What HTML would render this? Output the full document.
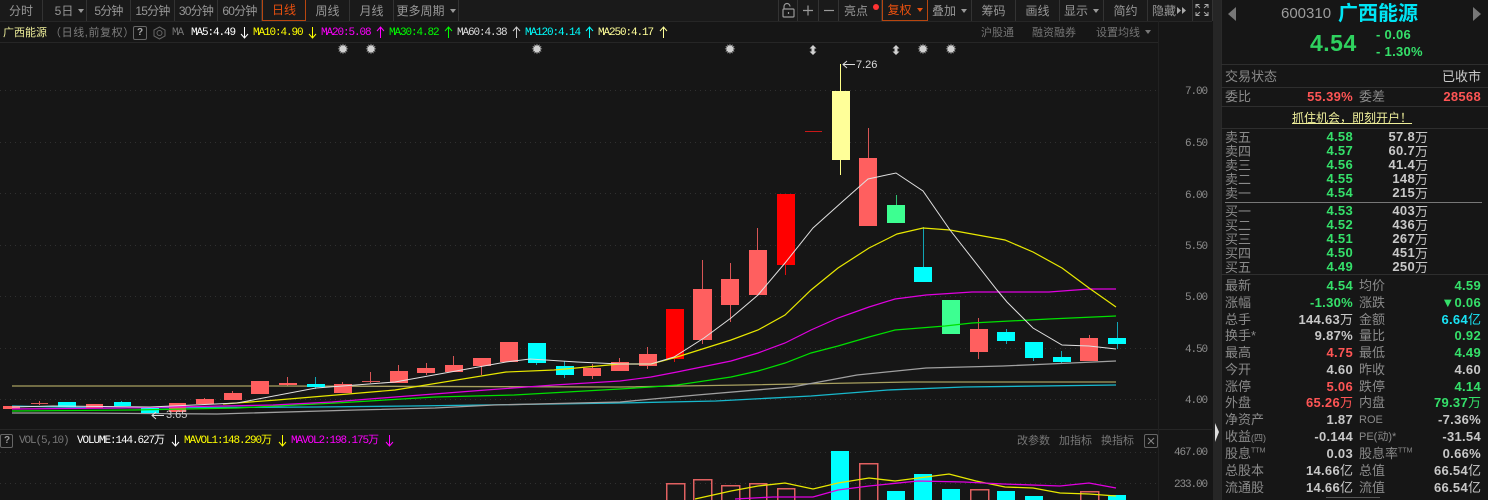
<!DOCTYPE html>
<html lang="zh">
<head>
<meta charset="utf-8">
<title>广西能源 600310</title>
<style>
html,body{margin:0;padding:0;background:#161616}
#p{position:relative;width:1488px;height:500px;overflow:hidden;background:#161616;font-family:"Liberation Sans","Noto Sans CJK SC",sans-serif;color:#999}
.t{position:absolute;white-space:nowrap;line-height:14px;height:14px}
.b{position:absolute;top:0;height:21px;line-height:22px;text-align:center;font-size:12px;color:#979797;border-right:1px solid #333;box-sizing:border-box;white-space:nowrap}
.n{letter-spacing:-.8px}
.on{border:1px solid #b8460f;border-top:0;color:#e8500f;line-height:21px}
.caret{display:inline-block;border:3px solid transparent;border-top:4px solid #999;border-bottom:0;margin-left:5px;vertical-align:2px}
.m{font-family:"Liberation Mono","Noto Sans CJK SC",monospace;font-size:11px;letter-spacing:-1.1px;top:26px}
.g{color:#8a8a8a;font-size:13px}
.v{font-size:13px;font-weight:bold;letter-spacing:.3px}
.gr{color:#35e06a}.rd{color:#ff5555}.wh{color:#c8c8c8}.cy{color:#19e3f5}
.ax{font-family:"Liberation Mono",monospace;font-size:11px;letter-spacing:-1.1px;color:#8c8c8c}
.l{position:absolute;background:#2e2e2e;height:1px;left:1221px;width:267px}
.s{position:absolute;top:43px;font-family:"DejaVu Sans",sans-serif;font-size:14px;line-height:14px;color:#d0d0d0;width:16px;text-align:center}
svg{position:absolute;left:0;top:0}
</style>
</head>
<body>
<div id="p">
<svg width="1488" height="500" viewBox="0 0 1488 500">
<rect x="0" y="0" width="1212" height="21" fill="#1a1a1a"/>
<g stroke="#262626" shape-rendering="crispEdges">
<path d="M0 21.500H1212M0 42.500H1158M0 429.500H1212M1213.500 0V500"/>
<path d="M1158.500 21V500" stroke="#212121"/>
</g>
<rect x="1214" y="0" width="7" height="500" fill="#262626"/>
<g stroke="#303030" stroke-dasharray="1 4" shape-rendering="crispEdges">
<path d="M0 90.500H1160M0 142.500H1160M0 193.500H1160M0 245.500H1160M0 296.500H1160M0 348.500H1160M0 399.500H1160M0 452.500H1160M0 483.500H1160"/>
</g>
<path d="M1215 423L1219 432L1215 442Z" fill="#ddd"/>

<!-- wicks -->
<g stroke-width="1" shape-rendering="crispEdges" fill="none">
<g stroke="#d85555">
<path d="M39.500 401V405M232.500 391V400M204.500 398V404M287.500 377V386M342.500 382V393M370.500 372V383M398.500 365V383M426.500 363V375M453.500 356V372M481.500 358V375M592.500 364V379M619.500 358V371M647.500 347V369M702.500 260V344M730.500 263V322M757.500 228V295M868.500 128V158M978.500 318V359M1089.500 335V361"/>
<path d="M31 403.500H48M362 381.500H380M279 384.500H297" />
</g>
<path d="M805 131.500H822" stroke="#c81818"/>
<path d="M674.500 309V362M785.500 194V275" stroke="#e01010"/>
<path d="M840.500 64V175" stroke="#ffff88"/>
<path d="M896.500 195V205" stroke="#2fbf70"/>
<g stroke="#11a5b5">
<path d="M121.500 401V406M315.500 377V389M536.500 343V365M564.500 361V378M923.500 227V267M1006.500 329V344M1033.500 342V361M1061.500 351V364M1117.500 322V349"/>
</g>
</g>

<!-- MA lines under flat region -->
<g fill="none" stroke-width="1.300">
<polyline stroke="#a8a060" points="12,386 273,386 620,387 742,385 911,382 1116,382"/>
<polyline stroke="#18b8cc" points="12,406 103,408 316,407 411,406 554,404 620,403 716,401 811,396 888,390 964,387 1116,385"/>
<polyline stroke="#a0a0a0" points="12,413 79,413 217,414 356,410 435,408 494,405 620,402 697,395 792,387 857,375 926,368 1003,366 1049,364 1116,361"/>
</g>

<!-- bodies -->
<g shape-rendering="crispEdges">
<g fill="#ff5f5f">
<rect x="3" y="406" width="17" height="3"/>
<rect x="86" y="404" width="17" height="4"/>
<rect x="169" y="403" width="17" height="9"/>
<rect x="196" y="399" width="18" height="5"/>
<rect x="224" y="393" width="18" height="7"/>
<rect x="251" y="381" width="18" height="13"/>
<rect x="279" y="383" width="18" height="2"/>
<rect x="334" y="384" width="18" height="9"/>
<rect x="390" y="371" width="18" height="12"/>
<rect x="417" y="368" width="18" height="5"/>
<rect x="445" y="365" width="18" height="7"/>
<rect x="473" y="358" width="18" height="8"/>
<rect x="500" y="342" width="18" height="20"/>
<rect x="583" y="368" width="18" height="8"/>
<rect x="611" y="362" width="18" height="9"/>
<rect x="639" y="354" width="18" height="12"/>
<rect x="693" y="289" width="19" height="51"/>
<rect x="721" y="279" width="18" height="26"/>
<rect x="749" y="250" width="18" height="45"/>
<rect x="859" y="158" width="18" height="68"/>
<rect x="970" y="329" width="18" height="23"/>
<rect x="1080" y="338" width="18" height="23"/>
</g>
<g fill="#00ffff">
<rect x="58" y="402" width="18" height="5"/>
<rect x="114" y="402" width="17" height="4"/>
<rect x="141" y="408" width="18" height="5"/>
<rect x="307" y="384" width="18" height="3"/>
<rect x="528" y="343" width="18" height="20"/>
<rect x="556" y="366" width="18" height="9"/>
<rect x="914" y="267" width="18" height="15"/>
<rect x="997" y="332" width="18" height="9"/>
<rect x="1025" y="342" width="18" height="16"/>
<rect x="1053" y="357" width="18" height="5"/>
<rect x="1108" y="338" width="18" height="6"/>
</g>
<rect x="666" y="309" width="18" height="50" fill="#ff0000"/>
<rect x="777" y="194" width="18" height="71" fill="#ff0000"/>
<rect x="832" y="91" width="18" height="69" fill="#ffff99"/>
<rect x="887" y="205" width="18" height="18" fill="#3dff91"/>
<rect x="942" y="300" width="18" height="34" fill="#3dff91"/>
</g>

<!-- MA lines -->
<g fill="none" stroke-width="1">
<polyline stroke="#00e000" stroke-width="1.200" points="12,411 134,410 237,408 336,403 435,397 514,395 620,389 651,387 677,385 731,377 758,371 785,363 811,353 838,346 869,337 895,330 945,326 972,323 1049,319 1116,316"/>
<polyline stroke="#e000e0" stroke-width="1.200" points="12,409 120,408 273,405 332,402 395,397 486,390 554,385 620,381 651,377 677,372 731,361 758,353 785,343 811,330 838,318 869,307 895,299 926,295 972,292 1049,292 1089,289 1116,289"/>
<polyline stroke="#e8e800" stroke-width="1.200" points="223,404 277,400 395,390 506,372 554,370 620,364 651,364 677,357 731,340 758,330 785,315 811,290 838,268 869,248 897,234 923,228 950,230 1005,240 1033,252 1062,268 1089,288 1116,307"/>
<polyline stroke="#e0e0e0" points="12,407 53,406 150,407 237,403 316,388 395,382 506,362 530,359 577,362 620,364 651,364 674,357 704,338 731,318 758,295 785,263 813,228 842,202 868,179 896,173 923,191 950,230 997,290 1007,302 1033,328 1062,345 1089,346 1116,349"/>
</g>

<!-- max/min arrows -->
<g fill="none" stroke="#ddd" stroke-width="1">
<path d="M855 64.500H843M847 61L843 64.500L847 68"/>
<path d="M164 415.500H152M156 412L152 415.500L156 419"/>
</g>

<!-- volume -->
<g shape-rendering="crispEdges">
<g fill="none" stroke="#e06060" stroke-width="1.500">
<path d="M666.500 500V483.500H684.500V500M693.500 500V479.500H711.500V500M721.500 500V485.500H739.500V500M749.500 500V483.500H766.500V500M777.500 500V488.500H794.500V500M859.500 500V463.500H877.500V500M970.500 500V489.500H988.500V500M1080.500 500V491.500H1098.500V500"/>
</g>
<g fill="#00ffff">
<rect x="831" y="451" width="18" height="49"/>
<rect x="887" y="491" width="18" height="9"/>
<rect x="914" y="474" width="18" height="26"/>
<rect x="942" y="489" width="18" height="11"/>
<rect x="997" y="491" width="18" height="9"/>
<rect x="1025" y="496" width="18" height="4"/>
<rect x="1108" y="495" width="18" height="5"/>
</g>
</g>
<g fill="none" stroke-width="1.300">
<polyline stroke="#e8e800" points="695,499 731,491 758,486 785,483 813,489 838,483 869,478 895,481 949,474 976,481 1005,487 1033,488 1060,493 1089,494 1116,496"/>
<polyline stroke="#e000e0" points="735,499 773,497 813,497 838,490 869,486 918,481 964,482 1003,484 1060,486 1089,483 1116,488"/>
</g>

<!-- header arrows -->
<g fill="none" stroke-width="1">
<path d="M244.500 27V38M241 34L244.500 38L248 34" stroke="#fff"/>
<path d="M312.500 27V38M309 34L312.500 38L316 34" stroke="#ff0"/>
<path d="M380.500 27V38M377 31L380.500 27L384 31" stroke="#f0f"/>
<path d="M448.500 27V38M445 31L448.500 27L452 31" stroke="#0f0"/>
<path d="M516.500 27V38M513 31L516.500 27L520 31" stroke="#ccc"/>
<path d="M589.500 27V38M586 31L589.500 27L593 31" stroke="#0ff"/>
<path d="M663.500 27V38M660 31L663.500 27L667 31" stroke="#ffff99"/>
<path d="M175.500 435V446M172 442L175.500 446L179 442" stroke="#fff"/>
<path d="M282.500 435V446M279 442L282.500 446L286 442" stroke="#ff0"/>
<path d="M389.500 435V446M386 442L389.500 446L393 442" stroke="#f0f"/>
</g>

<!-- small boxes/icons -->
<g fill="none" stroke="#666">
<rect x="133.500" y="26.500" width="13" height="13" rx="1.500"/>
<rect x="0.500" y="434.500" width="12" height="13" rx="1.500"/>
<rect x="1144.500" y="434.500" width="13" height="13" rx="1.500"/>
<path d="M1148 438L1154 444M1154 438L1148 444" stroke="#888"/>
<circle cx="159.500" cy="33" r="2.500"/>
<path d="M159.500 27L165 30V36L159.500 39L154 36V30Z"/>
</g>
<!-- lock, plus, minus -->
<g fill="none" stroke="#9a9a9a" stroke-width="1.200">
<rect x="783" y="9" width="11" height="8" rx="1"/>
<path d="M784 9V6.500a3 3 0 0 1 6 0"/>
<path d="M788.500 12V14"/>
<path d="M803 10.500H813M808 5.500V15.500"/>
<path d="M824 10.500H834"/>
</g>
<circle cx="876" cy="7" r="3" fill="#ff3333"/>
<!-- fullscreen -->
<g fill="none" stroke="#aaa">
<path d="M1196 8V4.500H1199.500M1208 8V4.500H1204.500M1196 12V15.500H1199.500M1208 12V15.500H1204.500"/>
<path d="M1196 4.500L1200 8M1208 4.500L1204 8M1196 15.500L1200 12M1208 15.500L1204 12"/>
</g>
<path d="M1177 7L1181 10.500L1177 14ZM1182 7L1186 10.500L1182 14Z" fill="#aaa"/>
<!-- quote arrows -->
<path d="M1236 7V21L1228 14Z" fill="#777"/>
<path d="M1473 7V21L1481 14Z" fill="#777"/>
<!-- marks -->
<g fill="#d0d0d0">
<path d="M813 45L816.500 48.500H814.500V51.500H816.500L813 55L809.500 51.500H811.500V48.500H809.500Z"/>
<path d="M896 45L899.500 48.500H897.500V51.500H899.500L896 55L892.500 51.500H894.500V48.500H892.500Z"/>
</g>
<!-- right panel vertical & rows -->
<path d="M1221.500 0V500" stroke="#2a2a2a" shape-rendering="crispEdges"/>
<path d="M1225 202.500H1482" stroke="#777" shape-rendering="crispEdges"/>
<path d="M1326 497.500H1380" stroke="#555" shape-rendering="crispEdges"/>
</svg>

<!-- toolbar left -->
<div class="b" style="left:0;width:43px">分时</div>
<div class="b" style="left:43px;width:44px;padding-left:10px">5日<i class="caret"></i></div>
<div class="b n" style="left:87px;width:44px">5分钟</div>
<div class="b n" style="left:131px;width:44px">15分钟</div>
<div class="b n" style="left:175px;width:43px">30分钟</div>
<div class="b n" style="left:218px;width:44px">60分钟</div>
<div class="b on" style="left:262px;width:44px">日线</div>
<div class="b" style="left:306px;width:44px">周线</div>
<div class="b" style="left:350px;width:44px">月线</div>
<div class="b" style="left:394px;width:65px">更多周期<i class="caret"></i></div>
<!-- toolbar right -->
<div class="b" style="left:778px;width:20px;border-left:1px solid #333"></div>
<div class="b" style="left:798px;width:21px"></div>
<div class="b" style="left:819px;width:20px"></div>
<div class="b" style="left:839px;width:43px;padding-right:8px">亮点</div>
<div class="b on" style="left:882px;width:46px">复权<i class="caret" style="border-top-color:#e8500f"></i></div>
<div class="b" style="left:928px;width:44px">叠加<i class="caret"></i></div>
<div class="b" style="left:972px;width:44px">筹码</div>
<div class="b" style="left:1016px;width:44px">画线</div>
<div class="b" style="left:1060px;width:44px">显示<i class="caret"></i></div>
<div class="b" style="left:1104px;width:44px">简约</div>
<div class="b" style="left:1148px;width:45px;text-align:left;padding-left:4px">隐藏</div>
<div class="b" style="left:1193px;width:20px"></div>

<!-- header row -->
<span class="t" style="left:3px;top:26px;font-size:11px;color:#eeee9a">广西能源</span>
<span class="t" style="left:50px;top:26px;font-size:11px;letter-spacing:.6px;color:#7d7d7d">（日线,前复权）</span>
<span class="t" style="left:137px;top:26px;font-size:10px;font-weight:bold;color:#aaa">?</span>
<span class="t m" style="left:172px;color:#777">MA</span>
<span class="t m" style="left:191px;color:#fff">MA5:4.49</span>
<span class="t m" style="left:253px;color:#ff0">MA10:4.90</span>
<span class="t m" style="left:321px;color:#f0f">MA20:5.08</span>
<span class="t m" style="left:389px;color:#0f0">MA30:4.82</span>
<span class="t m" style="left:457px;color:#ddd">MA60:4.38</span>
<span class="t m" style="left:525px;color:#0ff">MA120:4.14</span>
<span class="t m" style="left:598px;color:#ffff99">MA250:4.17</span>
<span class="t" style="left:981px;top:26px;font-size:11px;color:#747474">沪股通</span>
<span class="t" style="left:1032px;top:26px;font-size:11px;color:#747474">融资融券</span>
<span class="t" style="left:1096px;top:26px;font-size:11px;color:#747474">设置均线<i class="caret" style="border-top-color:#777"></i></span>

<!-- marks -->
<span class="s" style="left:335px">✹</span>
<span class="s" style="left:363px">✹</span>
<span class="s" style="left:529px">✹</span>
<span class="s" style="left:722px">✹</span>
<span class="s" style="left:915px">✹</span>
<span class="s" style="left:943px">✹</span>

<!-- chart labels -->
<span class="t" style="left:856px;top:58px;font-size:11px;color:#ddd">7.26</span>
<span class="t" style="left:166px;top:408px;font-size:11px;color:#ccc">3.65</span>
<span class="t ax" style="left:1185px;top:85px">7.00</span>
<span class="t ax" style="left:1185px;top:137px">6.50</span>
<span class="t ax" style="left:1185px;top:189px">6.00</span>
<span class="t ax" style="left:1185px;top:240px">5.50</span>
<span class="t ax" style="left:1185px;top:291px">5.00</span>
<span class="t ax" style="left:1185px;top:343px">4.50</span>
<span class="t ax" style="left:1185px;top:394px">4.00</span>
<span class="t ax" style="left:1174px;top:446px">467.00</span>
<span class="t ax" style="left:1174px;top:478px">233.00</span>

<!-- vol header -->
<span class="t" style="left:4px;top:434px;font-size:10px;font-weight:bold;color:#999">?</span>
<span class="t m" style="left:19px;top:434px;color:#777">VOL(5,10)</span>
<span class="t m" style="left:77px;top:434px;color:#fff">VOLUME:144.627万</span>
<span class="t m" style="left:184px;top:434px;color:#ff0">MAVOL1:148.290万</span>
<span class="t m" style="left:291px;top:434px;color:#f0f">MAVOL2:198.175万</span>
<span class="t" style="left:1017px;top:434px;font-size:11px;color:#777">改参数</span>
<span class="t" style="left:1059px;top:434px;font-size:11px;color:#777">加指标</span>
<span class="t" style="left:1101px;top:434px;font-size:11px;color:#777">换指标</span>

<!-- quote head -->
<span class="t" style="left:1281px;top:7px;font-size:15px;color:#9c9c9c">600310</span>
<span class="t" style="left:1338px;top:4px;height:20px;line-height:20px;font-size:20px;font-weight:bold;color:#00e5f5">广西能源</span>
<span class="t" style="left:1310px;top:29px;height:28px;line-height:28px;font-size:23px;font-weight:bold;color:#2fd25f;letter-spacing:.5px">4.54</span>
<span class="t v gr" style="left:1376px;top:28px">- 0.06</span>
<span class="t v gr" style="left:1376px;top:45px">- 1.30%</span>

<div class="l" style="top:64px"></div>
<span class="t g" style="left:1225px;top:70px">交易状态</span>
<span class="t wh" style="right:7px;top:70px;font-size:13px">已收市</span>
<div class="l" style="top:87px"></div>
<span class="t g" style="left:1225px;top:90px">委比</span>
<span class="t v rd" style="right:135px;top:90px">55.39%</span>
<span class="t g" style="left:1359px;top:90px">委差</span>
<span class="t v rd" style="right:7px;top:90px">28568</span>
<div class="l" style="top:106px"></div>
<span class="t" style="left:1292px;top:111px;font-size:12px;color:#eeee9a;text-decoration:underline">抓住机会，即刻开户！</span>
<div class="l" style="top:128px"></div>

<!-- order book -->
<span class="t g" style="left:1225px;top:131px">卖五</span><span class="t v gr" style="right:135px;top:130px">4.58</span><span class="t v wh" style="right:73px;top:130px">57.8</span><span class="t wh" style="right:60px;top:131px;font-size:13px">万</span>
<span class="t g" style="left:1225px;top:145px">卖四</span><span class="t v gr" style="right:135px;top:144px">4.57</span><span class="t v wh" style="right:73px;top:144px">60.7</span><span class="t wh" style="right:60px;top:145px;font-size:13px">万</span>
<span class="t g" style="left:1225px;top:159px">卖三</span><span class="t v gr" style="right:135px;top:158px">4.56</span><span class="t v wh" style="right:73px;top:158px">41.4</span><span class="t wh" style="right:60px;top:159px;font-size:13px">万</span>
<span class="t g" style="left:1225px;top:173px">卖二</span><span class="t v gr" style="right:135px;top:172px">4.55</span><span class="t v wh" style="right:73px;top:172px">148</span><span class="t wh" style="right:60px;top:173px;font-size:13px">万</span>
<span class="t g" style="left:1225px;top:187px">卖一</span><span class="t v gr" style="right:135px;top:186px">4.54</span><span class="t v wh" style="right:73px;top:186px">215</span><span class="t wh" style="right:60px;top:187px;font-size:13px">万</span>
<span class="t g" style="left:1225px;top:205px">买一</span><span class="t v gr" style="right:135px;top:204px">4.53</span><span class="t v wh" style="right:73px;top:204px">403</span><span class="t wh" style="right:60px;top:205px;font-size:13px">万</span>
<span class="t g" style="left:1225px;top:219px">买二</span><span class="t v gr" style="right:135px;top:218px">4.52</span><span class="t v wh" style="right:73px;top:218px">436</span><span class="t wh" style="right:60px;top:219px;font-size:13px">万</span>
<span class="t g" style="left:1225px;top:233px">买三</span><span class="t v gr" style="right:135px;top:232px">4.51</span><span class="t v wh" style="right:73px;top:232px">267</span><span class="t wh" style="right:60px;top:233px;font-size:13px">万</span>
<span class="t g" style="left:1225px;top:247px">买四</span><span class="t v gr" style="right:135px;top:246px">4.50</span><span class="t v wh" style="right:73px;top:246px">451</span><span class="t wh" style="right:60px;top:247px;font-size:13px">万</span>
<span class="t g" style="left:1225px;top:261px">买五</span><span class="t v gr" style="right:135px;top:260px">4.49</span><span class="t v wh" style="right:73px;top:260px">250</span><span class="t wh" style="right:60px;top:261px;font-size:13px">万</span>
<div class="l" style="top:274px"></div>

<!-- stats -->
<span class="t g" style="left:1225px;top:279px">最新</span><span class="t v gr" style="right:135px;top:279px">4.54</span><span class="t g" style="left:1359px;top:279px">均价</span><span class="t v gr" style="right:7px;top:279px">4.59</span>
<span class="t g" style="left:1225px;top:296px">涨幅</span><span class="t v gr" style="right:135px;top:296px">-1.30%</span><span class="t g" style="left:1359px;top:296px">涨跌</span><span class="t v gr" style="right:7px;top:296px">▼0.06</span>
<span class="t g" style="left:1225px;top:313px">总手</span><span class="t v wh" style="right:148px;top:313px">144.63</span><span class="t wh" style="right:135px;top:313px;font-size:13px">万</span><span class="t g" style="left:1359px;top:313px">金额</span><span class="t v cy" style="right:20px;top:313px">6.64</span><span class="t cy" style="right:7px;top:313px;font-size:13px">亿</span>
<span class="t g" style="left:1225px;top:329px">换手*</span><span class="t v wh" style="right:135px;top:329px">9.87%</span><span class="t g" style="left:1359px;top:329px">量比</span><span class="t v gr" style="right:7px;top:329px">0.92</span>
<span class="t g" style="left:1225px;top:346px">最高</span><span class="t v rd" style="right:135px;top:346px">4.75</span><span class="t g" style="left:1359px;top:346px">最低</span><span class="t v gr" style="right:7px;top:346px">4.49</span>
<span class="t g" style="left:1225px;top:363px">今开</span><span class="t v wh" style="right:135px;top:363px">4.60</span><span class="t g" style="left:1359px;top:363px">昨收</span><span class="t v wh" style="right:7px;top:363px">4.60</span>
<span class="t g" style="left:1225px;top:380px">涨停</span><span class="t v rd" style="right:135px;top:380px">5.06</span><span class="t g" style="left:1359px;top:380px">跌停</span><span class="t v gr" style="right:7px;top:380px">4.14</span>
<span class="t g" style="left:1225px;top:396px">外盘</span><span class="t v rd" style="right:148px;top:396px">65.26</span><span class="t rd" style="right:135px;top:396px;font-size:13px">万</span><span class="t g" style="left:1359px;top:396px">内盘</span><span class="t v gr" style="right:20px;top:396px">79.37</span><span class="t gr" style="right:7px;top:396px;font-size:13px">万</span>
<span class="t g" style="left:1225px;top:413px">净资产</span><span class="t v wh" style="right:135px;top:413px">1.87</span><span class="t g" style="left:1359px;top:413px;font-size:11px">ROE</span><span class="t v wh" style="right:7px;top:413px">-7.36%</span>
<span class="t g" style="left:1225px;top:430px">收益<small style="font-size:9px">(四)</small></span><span class="t v wh" style="right:135px;top:430px">-0.144</span><span class="t g" style="left:1359px;top:430px;font-size:11px">PE(动)*</span><span class="t v wh" style="right:7px;top:430px">-31.54</span>
<span class="t g" style="left:1225px;top:447px">股息<sup style="font-size:7px;line-height:0">TTM</sup></span><span class="t v wh" style="right:135px;top:447px">0.03</span><span class="t g" style="left:1359px;top:447px">股息率<sup style="font-size:7px;line-height:0">TTM</sup></span><span class="t v wh" style="right:7px;top:447px">0.66%</span>
<span class="t g" style="left:1225px;top:464px">总股本</span><span class="t v wh" style="right:148px;top:464px">14.66</span><span class="t wh" style="right:135px;top:464px;font-size:13px">亿</span><span class="t g" style="left:1359px;top:464px">总值</span><span class="t v wh" style="right:20px;top:464px">66.54</span><span class="t wh" style="right:7px;top:464px;font-size:13px">亿</span>
<span class="t g" style="left:1225px;top:481px">流通股</span><span class="t v wh" style="right:148px;top:481px">14.66</span><span class="t wh" style="right:135px;top:481px;font-size:13px">亿</span><span class="t g" style="left:1359px;top:481px">流值</span><span class="t v wh" style="right:20px;top:481px">66.54</span><span class="t wh" style="right:7px;top:481px;font-size:13px">亿</span>
</div>
</body>
</html>
